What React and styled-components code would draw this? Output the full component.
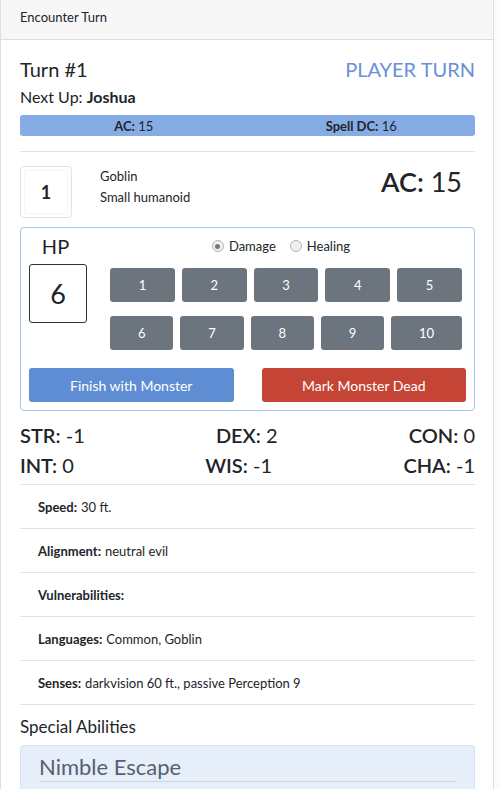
import React from "react";
import styled, { createGlobalStyle } from "styled-components";

const Global = createGlobalStyle`
  html, body { margin: 0; padding: 0; }
  body {
    background: #fafbfc;
    font-family: Lato, "Noto Sans", sans-serif;
    color: #212529;
  }
  * { box-sizing: border-box; }
`;

const Card = styled.div`
  width: 494px;
  background: #fff;
  border-left: 1px solid #dfdfdf;
  border-right: 1px solid #dfdfdf;
  min-height: 789px;
`;

const CardHeader = styled.div`
  height: 40px;
  padding: 0 19px;
  display: flex;
  align-items: center;
  padding-bottom: 5px;
  font-size: 13px;
  background: #f7f7f7;
  border-bottom: 1px solid #dcdcdc;
`;

const CardBody = styled.div`
  padding: 17px 18px 0 19px;
`;

const TurnRow = styled.div`
  display: flex;
  justify-content: space-between;
  font-size: 20px;
  line-height: 24px;
`;

const PlayerTurn = styled.span`
  color: #6a8fd8;
`;

const NextUp = styled.div`
  margin-top: 4px;
  font-size: 16px;
  line-height: 24px;
  b { font-weight: 700; }
`;

const InfoBar = styled.div`
  margin-top: 6px;
  height: 21px;
  border-radius: 3px;
  background: #85ace4;
  display: grid;
  grid-template-columns: 1fr 1fr;
  font-size: 13px;
  align-items: center;
  text-align: center;
  b { font-weight: 700; }
`;

const Rule = styled.div`
  height: 1px;
  background: #e3e3e3;
  margin-top: ${(p) => p.$top || 0}px;
`;

const MonsterRow = styled.div`
  margin-top: 14px;
  display: flex;
  align-items: flex-start;
`;

const Thumb = styled.div`
  width: 52px;
  height: 52px;
  border: 1px solid #dfe2e6;
  border-radius: 4px;
  padding: 3px;
  display: flex;
`;

const ThumbInner = styled.div`
  flex: 1;
  border: 1px solid #f4f5f6;
  display: flex;
  align-items: center;
  justify-content: center;
  font-weight: 700;
  font-size: 18px;
`;

const NameBlock = styled.div`
  margin-left: 28px;
  font-size: 13px;
  line-height: 21px;
  flex: 1;
`;

const BigAC = styled.div`
  margin-right: 13px;
  margin-top: 1px;
  font-size: 27px;
  line-height: 30px;
  b { font-weight: 600; }
`;

const HPBox = styled.div`
  margin-top: 9px;
  border: 1px solid #a9c5ee;
  border-radius: 4px;
  padding: 8px;
`;

const HPTop = styled.div`
  display: flex;
  gap: 22px;
`;

const HPLeft = styled.div`
  width: 59px;
  display: flex;
  flex-direction: column;
  align-items: center;
  gap: 8px;
`;

const HPLabel = styled.div`
  font-size: 20px;
  line-height: 20px;
  margin-left: -6px;
`;

const HPInput = styled.div`
  width: 58px;
  height: 59px;
  border: 1px solid #333;
  border-radius: 3px;
  display: flex;
  align-items: center;
  justify-content: center;
  font-size: 27px;
  margin-left: -1px;
`;

const HPRight = styled.div`
  flex: 1;
  margin-right: 4px;
  display: flex;
  flex-direction: column;
`;

const RadioRow = styled.div`
  height: 20px;
  display: flex;
  justify-content: center;
  align-items: center;
  gap: 14px;
  font-size: 13px;
  padding-right: 10px;
`;

const RadioLabel = styled.label`
  display: flex;
  align-items: center;
  gap: 5px;
`;

const RadioDot = styled.span`
  width: 12px;
  height: 12px;
  border-radius: 50%;
  border: 1px solid #b5b5b5;
  background: #f0f0f0;
  display: flex;
  align-items: center;
  justify-content: center;
  &::after {
    content: "";
    width: 5px;
    height: 5px;
    border-radius: 50%;
    background: ${(p) => (p.$checked ? "#777" : "transparent")};
  }
`;

const NumRow = styled.div`
  display: flex;
  gap: 7px;
  margin-top: ${(p) => p.$top}px;
`;

const NumButton = styled.button`
  flex: 1 1 auto;
  height: 34px;
  border: none;
  border-radius: 3px;
  background: #6c757d;
  color: #fff;
  font-family: inherit;
  font-size: 13px;
  padding: 0 12px;
`;

const ActionRow = styled.div`
  margin-top: 18px;
  display: grid;
  grid-template-columns: 1fr 1fr;
  gap: 28px;
`;

const ActionButton = styled.button`
  height: 34px;
  border: none;
  border-radius: 3px;
  background: ${(p) => p.$bg};
  color: #fff;
  font-family: inherit;
  font-size: 14px;
`;

const StatRow = styled.div`
  display: flex;
  justify-content: space-between;
  font-size: 20px;
  line-height: 30px;
  margin-top: ${(p) => p.$top || 0}px;
  b { font-weight: 600; }
`;

const InfoRow = styled.div`
  height: 44px;
  border-bottom: 1px solid #e3e3e3;
  display: flex;
  align-items: center;
  padding-left: 18px;
  padding-top: 1px;
  font-size: 13px;
  b { font-weight: 700; margin-right: 4px; }
`;

const SectionTitle = styled.div`
  margin-top: 10px;
  font-size: 17px;
  line-height: 24px;
`;

const AbilityBox = styled.div`
  margin-top: 6px;
  background: #e6eef9;
  border: 1px solid #d8e3f3;
  border-bottom: none;
  border-radius: 4px 4px 0 0;
  padding: 8px 18px 0 18px;
  height: 50px;
`;

const AbilityTitle = styled.div`
  font-size: 22px;
  line-height: 26px;
  color: #566070;
  padding-bottom: 1px;
  border-bottom: 1px solid #cfd6e0;
`;

const nums1 = [1, 2, 3, 4, 5];
const nums2 = [6, 7, 8, 9, 10];

const infos = [
  ["Speed:", "30 ft."],
  ["Alignment:", "neutral evil"],
  ["Vulnerabilities:", ""],
  ["Languages:", "Common, Goblin"],
  ["Senses:", "darkvision 60 ft., passive Perception 9"],
];

export default function App() {
  return (
    <>
      <Global />
      <Card>
        <CardHeader>Encounter Turn</CardHeader>
        <CardBody>
          <TurnRow>
            <span>Turn #1</span>
            <PlayerTurn>PLAYER TURN</PlayerTurn>
          </TurnRow>
          <NextUp>
            Next Up: <b>Joshua</b>
          </NextUp>
          <InfoBar>
            <span>
              <b>AC:</b> 15
            </span>
            <span>
              <b>Spell DC:</b> 16
            </span>
          </InfoBar>
          <Rule $top={15} />
          <MonsterRow>
            <Thumb>
              <ThumbInner>1</ThumbInner>
            </Thumb>
            <NameBlock>
              <div>Goblin</div>
              <div>Small humanoid</div>
            </NameBlock>
            <BigAC>
              <b>AC:</b> 15
            </BigAC>
          </MonsterRow>
          <HPBox>
            <HPTop>
              <HPLeft>
                <HPLabel>HP</HPLabel>
                <HPInput>6</HPInput>
              </HPLeft>
              <HPRight>
                <RadioRow>
                  <RadioLabel>
                    <RadioDot $checked />
                    Damage
                  </RadioLabel>
                  <RadioLabel>
                    <RadioDot />
                    Healing
                  </RadioLabel>
                </RadioRow>
                <NumRow $top={12}>
                  {nums1.map((n) => (
                    <NumButton key={n}>{n}</NumButton>
                  ))}
                </NumRow>
                <NumRow $top={14}>
                  {nums2.map((n) => (
                    <NumButton key={n}>{n}</NumButton>
                  ))}
                </NumRow>
              </HPRight>
            </HPTop>
            <ActionRow>
              <ActionButton $bg="#5f8dd3">Finish with Monster</ActionButton>
              <ActionButton $bg="#c44536">Mark Monster Dead</ActionButton>
            </ActionRow>
          </HPBox>
          <StatRow $top={9}>
            <span><b>STR:</b> -1</span>
            <span><b>DEX:</b> 2</span>
            <span><b>CON:</b> 0</span>
          </StatRow>
          <StatRow>
            <span><b>INT:</b> 0</span>
            <span><b>WIS:</b> -1</span>
            <span><b>CHA:</b> -1</span>
          </StatRow>
          <Rule $top={4} />
          {infos.map(([k, v]) => (
            <InfoRow key={k}>
              <b>{k}</b>
              {v}
            </InfoRow>
          ))}
          <SectionTitle>Special Abilities</SectionTitle>
          <AbilityBox>
            <AbilityTitle>Nimble Escape</AbilityTitle>
          </AbilityBox>
        </CardBody>
      </Card>
    </>
  );
}
